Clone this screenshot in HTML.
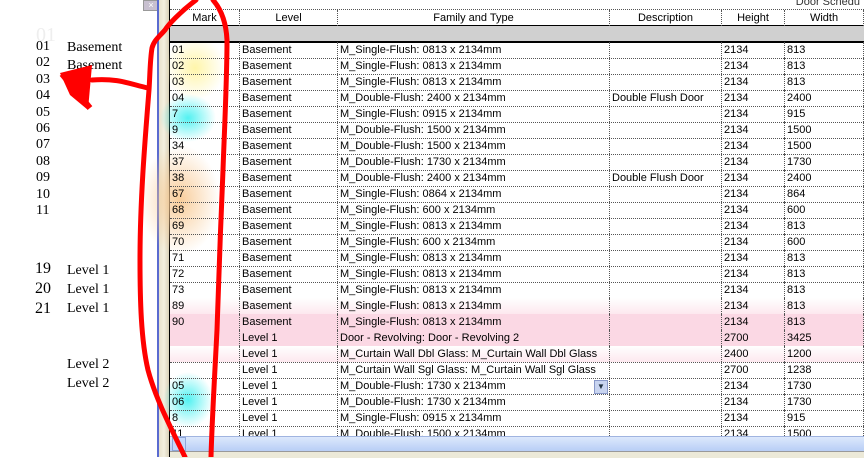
<!DOCTYPE html>
<html><head><style>
body{margin:0;width:864px;height:457px;overflow:hidden;background:#fff;position:relative;font-family:"Liberation Sans",sans-serif}
.l{position:absolute;font-family:"Liberation Serif",serif;font-size:14px;color:#000}
#tbl{position:absolute;left:170px;top:0;width:694px;height:457px}
.row{position:absolute;left:0;width:694px;height:16px;border-bottom:1px dotted #555;font-size:11px;line-height:16px}
.c{position:absolute;top:0;height:16px;border-right:1px dotted #555;padding-left:2px;box-sizing:border-box;white-space:nowrap;overflow:hidden}
.h .c{text-align:center;padding:0}
</style></head><body>
<div class="l" style="left:36px;top:24px;color:#eee;font-size:20px">01</div>
<div class="l" style="left:36px;top:39px;line-height:16.4px">01<br>02<br>03<br>04<br>05<br>06<br>07<br>08<br>09<br>10<br>11</div>
<div class="l" style="left:67px;top:39px;line-height:18px">Basement<br>Basement</div>
<div class="l" style="left:35px;top:259px;font-size:16px;line-height:20px">19<br>20<br>21</div>
<div class="l" style="left:67px;top:261px;line-height:19px">Level 1<br>Level 1<br>Level 1</div>
<div class="l" style="left:67px;top:355px;line-height:19px">Level 2<br>Level 2</div>
<div style="position:absolute;left:143px;top:0;width:14px;height:9px;background:#c8c0d0;border:1px solid #999;color:#fff;font-size:9px;line-height:8px;text-align:center">×</div>
<div style="position:absolute;left:157px;top:0;width:2px;height:457px;background:#5a6bd0"></div>
<div style="position:absolute;left:159px;top:0;width:10px;height:457px;background:linear-gradient(90deg,#e8e2cc,#f4f0e0,#d8d0b8)"></div>
<div style="position:absolute;left:169px;top:0;width:1px;height:457px;background:#000"></div>
<svg style="position:absolute;left:0;top:0" width="864" height="457">
<defs>
<radialGradient id="y"><stop offset="0" stop-color="#fff4a0" stop-opacity=".9"/><stop offset="1" stop-color="#fff4a0" stop-opacity="0"/></radialGradient>
<radialGradient id="cy"><stop offset="0" stop-color="#40f0f0" stop-opacity=".9"/><stop offset="1" stop-color="#40f0f0" stop-opacity="0"/></radialGradient>
<radialGradient id="o"><stop offset="0" stop-color="#f8c890" stop-opacity=".9"/><stop offset="1" stop-color="#f8c890" stop-opacity="0"/></radialGradient>
</defs>
<ellipse cx="195" cy="68" rx="30" ry="32" fill="url(#y)"/>
<ellipse cx="188" cy="118" rx="28" ry="24" fill="url(#cy)"/>
<ellipse cx="180" cy="200" rx="40" ry="55" fill="url(#o)"/>
<ellipse cx="188" cy="400" rx="25" ry="28" fill="url(#cy)"/>
</svg>
<div id="tbl">
<div style="position:absolute;right:4px;top:-4px;font-size:11px;color:#333">Door Schedu</div>
<div class="row h" style="top:9px;height:15px;border-top:1px dotted #555;border-bottom:2px solid #000;background:#fff">
<div class="c" style="left:0;width:70px">Mark</div><div class="c" style="left:70px;width:98px">Level</div><div class="c" style="left:168px;width:272px">Family and Type</div><div class="c" style="left:440px;width:112px">Description</div><div class="c" style="left:552px;width:63px">Height</div><div class="c" style="left:615px;width:79px">Width</div></div>
<div style="position:absolute;left:0;top:26px;width:694px;height:15px;background:#d0d0d0;border-bottom:2px solid #000"></div>
<div id="rows"></div>
<div style="position:absolute;left:0;top:436px;width:694px;height:14px;background:linear-gradient(#dce8fc,#b8cef6);border-top:1px solid #a0b4e0"></div>
<div style="position:absolute;left:2px;top:437px;width:12px;height:12px;background:#c6d8fa;border:1px solid #8ea6d8;color:#345;font-size:10px;line-height:12px;text-align:center">‹</div>
<div style="position:absolute;left:0;top:451px;width:694px;height:6px;background:#ece9d8;border-top:1px solid #999"></div>
</div>
<svg style="position:absolute;left:0;top:0" width="864" height="457">
<g fill="none" stroke="#f00" stroke-width="5" stroke-linecap="round" stroke-linejoin="round">
<path d="M196,0 C180,12 168,25 165,30 C160,36 154,40 152,48 C150,60 150,75 149,90 C145,140 140,200 140,260 C140,300 141,340 148,370 C156,400 172,430 185,457"/>
<path d="M213,0 C220,8 226,20 227,40 C227,80 224,140 223,170 C221,220 218,290 217,330 C215,370 212,420 211,457"/>
<path d="M148,88 C130,84 118,78 92,80"/>
</g>
<polygon points="60,73 92,65 88,110 70,95" fill="#f00"/>
<path d="M62,74 L90,108" stroke="#f00" stroke-width="6"/>
</svg>
<script>
const d=[["01","Basement","M_Single-Flush: 0813 x 2134mm","","2134","813"],["02","Basement","M_Single-Flush: 0813 x 2134mm","","2134","813"],["03","Basement","M_Single-Flush: 0813 x 2134mm","","2134","813"],["04","Basement","M_Double-Flush: 2400  x 2134mm","Double Flush Door","2134","2400"],["7","Basement","M_Single-Flush: 0915 x 2134mm","","2134","915"],["9","Basement","M_Double-Flush: 1500 x 2134mm","","2134","1500"],["34","Basement","M_Double-Flush: 1500 x 2134mm","","2134","1500"],["37","Basement","M_Double-Flush: 1730 x 2134mm","","2134","1730"],["38","Basement","M_Double-Flush: 2400  x 2134mm","Double Flush Door","2134","2400"],["67","Basement","M_Single-Flush: 0864 x 2134mm","","2134","864"],["68","Basement","M_Single-Flush: 600 x 2134mm","","2134","600"],["69","Basement","M_Single-Flush: 0813 x 2134mm","","2134","813"],["70","Basement","M_Single-Flush: 600 x 2134mm","","2134","600"],["71","Basement","M_Single-Flush: 0813 x 2134mm","","2134","813"],["72","Basement","M_Single-Flush: 0813 x 2134mm","","2134","813"],["73","Basement","M_Single-Flush: 0813 x 2134mm","","2134","813"],["89","Basement","M_Single-Flush: 0813 x 2134mm","","2134","813"],["90","Basement","M_Single-Flush: 0813 x 2134mm","","2134","813"],["","Level 1","Door -  Revolving: Door -  Revolving 2","","2700","3425"],["","Level 1","M_Curtain Wall Dbl Glass: M_Curtain Wall Dbl Glass","","2400","1200"],["","Level 1","M_Curtain Wall Sgl Glass: M_Curtain Wall Sgl Glass","","2700","1238"],["05","Level 1","M_Double-Flush: 1730 x 2134mm","","2134","1730"],["06","Level 1","M_Double-Flush: 1730 x 2134mm","","2134","1730"],["8","Level 1","M_Single-Flush: 0915 x 2134mm","","2134","915"],["11","Level 1","M_Double-Flush: 1500 x 2134mm","","2134","1500"]];
const L=[0,70,168,440,552,615],W=[70,98,272,112,63,79];let h="";
d.forEach((r,i)=>{let bg=i==17||i==18?"background:#fbd8e4":(i==16||i==19?"background:linear-gradient(#fff,#fde8ef)":"");
h+=`<div class="row" style="top:${42+i*16}px;${bg}">`;r.forEach((t,j)=>h+=`<div class="c" style="left:${L[j]}px;width:${W[j]}px">${t}</div>`);
if(i==21)h+=`<div style="position:absolute;left:424px;top:2px;width:12px;height:12px;background:#c8d4f0;border:1px solid #8898c8;font-size:8px;line-height:12px;text-align:center;color:#234">▼</div>`;h+="</div>"});
document.getElementById("rows").innerHTML=h;
</script>
</body></html>
